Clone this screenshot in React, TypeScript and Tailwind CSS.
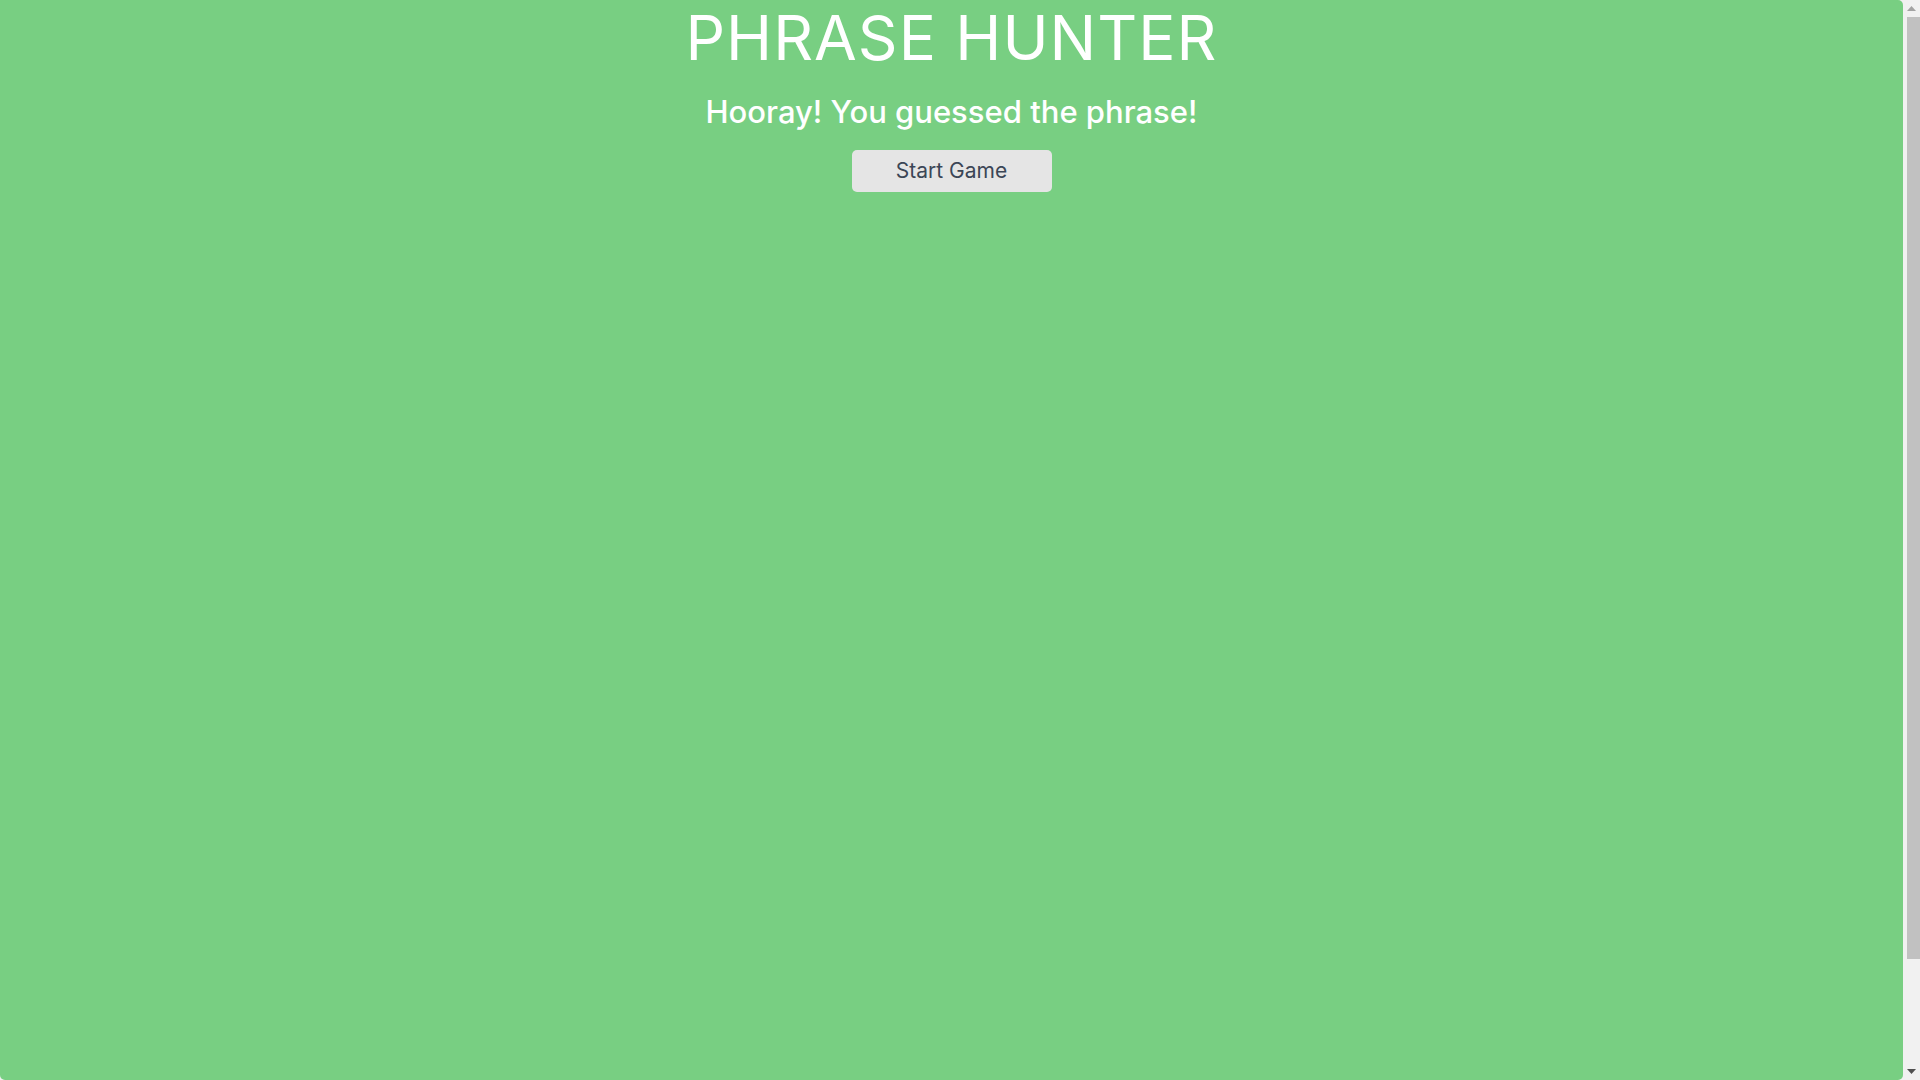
import React from "react";

export default function App() {
  return (
    <div className="flex h-screen w-full overflow-hidden bg-[#f1f1f1]" style={{ fontFamily: "Inter, 'Open Sans', sans-serif" }}>
      <main className="flex flex-1 flex-col items-center rounded-tr-[5px] rounded-b-[5px] bg-[#78cf82]">
        <h2 className="mt-[7px] text-[62px] leading-none font-normal text-white tracking-[1px]">PHRASE HUNTER</h2>
        <h1 className="mt-[27px] text-[31px] leading-none font-medium text-white">Hooray! You guessed the phrase!</h1>
        <button className="mt-[23px] h-[42px] w-[200px] rounded-[5px] bg-[#e5e5e5] text-[21px] text-[#3b4656]">Start Game</button>
      </main>
      <div className="flex w-[17px] flex-col items-center bg-[#f1f1f1]">
        <div className="flex h-[17px] w-full items-center justify-center">
          <svg width="9" height="5" viewBox="0 0 9 5"><path d="M0 5 L4.5 0 L9 5 Z" fill="#a3a3a3" /></svg>
        </div>
        <div className="h-[942px] w-[13px] ml-[3px] bg-[#c1c1c1]" />
        <div className="flex-1" />
        <div className="flex h-[17px] w-full items-center justify-center">
          <svg width="9" height="5" viewBox="0 0 9 5"><path d="M0 0 L9 0 L4.5 5 Z" fill="#505050" /></svg>
        </div>
      </div>
    </div>
  );
}
